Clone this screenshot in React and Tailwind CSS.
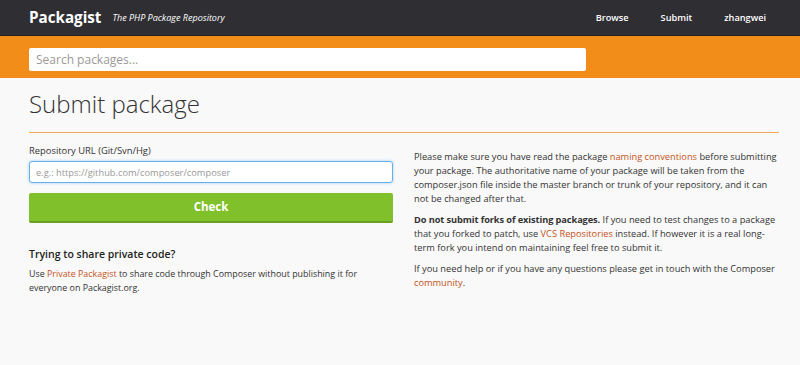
import React from 'react'

const font = { fontFamily: '"Open Sans", "Noto Sans", sans-serif' }

const Header = () => (
    <div className="bg-[#2f2e33] border-b border-[#222125] h-[36px]">
        <div className="flex items-center h-[35px] pl-[29px] pr-[34px]">
            <span className="text-white font-bold text-[15.2px] leading-none">Packagist</span>
            <span className="text-white italic text-[9px] ml-[11px] leading-none">The PHP Package Repository</span>
            <nav className="ml-auto flex items-center gap-[32px] text-white font-semibold text-[9.2px]">
                <a>Browse</a>
                <a>Submit</a>
                <a>zhangwei</a>
            </nav>
        </div>
    </div>
)

const SearchBar = () => (
    <div className="bg-[#f28d1a] h-[42px] pl-[29px] pt-[10px]">
        <input
            type="text"
            placeholder="Search packages..."
            className="w-[557px] h-[23px] bg-white rounded-[2px] px-[7px] text-[12px] text-[#555] placeholder-[#999] outline-none"
        />
    </div>
)

const Link = ({ children }) => (
    <a className="text-[#c4531b]">{children}</a>
)

export default function App() {
    return (
        <div className="min-h-[365px] bg-[#f9f9f9] text-[#333]" style={font}>
            <Header />
            <SearchBar />
            <div className="pl-[29px] w-[779px]">
                <h1 className="font-light text-[24px] leading-[26px] pt-[13px] pb-[15px] text-[#333]">Submit package</h1>
                <div className="h-px bg-[#f2a95c]" />
                <div className="grid grid-cols-[364px_365px] gap-[21px]">
                    <div className="pt-[11px]">
                        <label className="block text-[9.4px] leading-[14px] mb-[3px]">Repository URL (Git/Svn/Hg)</label>
                        <input
                            type="text"
                            placeholder="e.g.: https://github.com/composer/composer"
                            className="block w-full h-[22px] bg-white border border-[#66afe9] rounded-[3px] shadow-[0_0_3px_rgba(102,175,233,0.6)] px-[6px] text-[9.3px] placeholder-[#999] outline-none"
                        />
                        <button className="block w-full h-[30px] mt-[10px] bg-[#80c02a] border-b-2 border-[#6a9f22] rounded-[2px] text-white font-bold text-[11.5px]">
                            Check
                        </button>
                        <h4 className="font-semibold text-[10.5px] leading-[16px] mt-[23px] mb-[5px] text-[#222]">Trying to share private code?</h4>
                        <p className="text-[8.9px] leading-[14px]">
                            Use <Link>Private Packagist</Link> to share code through Composer without publishing it for everyone on Packagist.org.
                        </p>
                    </div>
                    <div className="pt-[17px] text-[9.25px] leading-[14px]">
                        <p className="mb-[7px]">
                            Please make sure you have read the package <Link>naming conventions</Link> before submitting your package. The authoritative name of your package will be taken from the composer.json file inside the master branch or trunk of your repository, and it can not be changed after that.
                        </p>
                        <p className="mb-[7px]">
                            <strong className="font-bold tracking-[-0.1px]">Do not submit forks of existing packages.</strong> If you need to test changes to a package that you forked to patch, use <Link>VCS Repositories</Link> instead. If however it is a real long-term fork you intend on maintaining feel free to submit it.
                        </p>
                        <p>
                            If you need help or if you have any questions please get in touch with the Composer <Link>community</Link>.
                        </p>
                    </div>
                </div>
            </div>
        </div>
    )
}
